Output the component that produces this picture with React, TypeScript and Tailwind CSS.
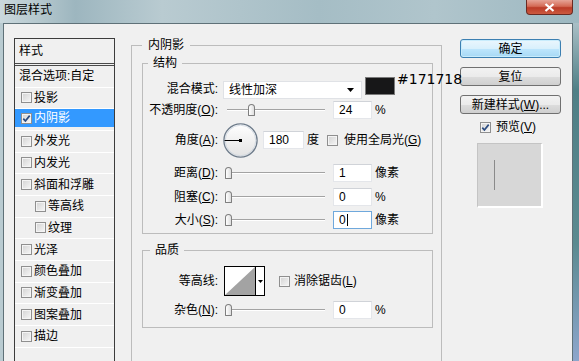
import React from 'react';

const FONT = "font-['Liberation_Sans','Noto_Sans_CJK_SC',sans-serif]";

const Check: React.FC<{ checked?: boolean }> = ({ checked }) => (
  <span className="inline-flex w-[11px] h-[11px] shrink-0 items-center justify-center border border-[#8f8f8f] bg-[linear-gradient(135deg,#d2d2d2,#f7f7f7)] shadow-[inset_0_0_0_1px_#f4f4f4]">
    {checked && (
      <svg width="9" height="9" viewBox="0 0 9 9">
        <path d="M1.3 4.6 L3.4 7 L7.7 1.6" stroke="#2a4b80" strokeWidth="1.7" fill="none" />
      </svg>
    )}
  </span>
);

const Slider: React.FC<{ at: 'zero' | 'low' }> = ({ at }) => (
  <div className="relative w-[100px] h-[14px] shrink-0">
    <div className="absolute left-[2px] right-0 top-[6px] h-[2px] border-t border-[#a3a3a3] bg-white" />
    <div
      className={`absolute top-[1px] w-[7px] h-[12px] rounded-t-[4px] rounded-b-[1px] border border-[#7f7f7f] bg-[linear-gradient(90deg,#ffffff,#dedede)] ${
        at === 'low' ? 'left-[23px]' : 'left-0'
      }`}
    />
  </div>
);

const Field: React.FC<{ value: string; w?: string; focus?: boolean }> = ({ value, w = 'w-[39px]', focus }) => (
  <div
    className={`${w} h-[18px] shrink-0 flex items-center pl-[5px] bg-white border ${
      focus ? 'border-[#6fa8dc]' : 'border-[#e4e6ea] border-t-[#d0d3d8]'
    }`}
  >
    <span>{value}</span>
    {focus && <span className="ml-[1px] w-[1px] h-[12px] bg-black" />}
  </div>
);

const Label: React.FC<{ children: React.ReactNode }> = ({ children }) => (
  <span className="w-[75px] shrink-0 text-right whitespace-nowrap">{children}</span>
);

const listItems = [
  { label: '投影' },
  { label: '内阴影', checked: true, active: true },
  { label: '外发光' },
  { label: '内发光' },
  { label: '斜面和浮雕' },
  { label: '等高线', sub: true },
  { label: '纹理', sub: true },
  { label: '光泽' },
  { label: '颜色叠加' },
  { label: '渐变叠加' },
  { label: '图案叠加' },
  { label: '描边' },
];

export default function App() {
  return (
    <div className={`w-[579px] h-[361px] overflow-hidden flex flex-col text-[12px] leading-[16px] text-black ${FONT}`}>
      {/* title bar */}
      <div className="h-[23px] shrink-0 flex items-start bg-[linear-gradient(90deg,#cad8dd_0%,#b4c7cd_7%,#9db6bf_13%,#b9cbd1_28%,#a5bdc5_55%,#b0c5cc_75%,#9db8c1_100%)]">
        <span className="ml-[4px] mt-[2px]">图层样式</span>
        <div className="ml-auto mr-[6px] w-[47px] h-[15px] flex items-center justify-center rounded-b-[4px] border border-t-0 border-[#6a2a22] bg-[linear-gradient(180deg,#e6a497_0%,#d46a55_45%,#bb3b27_55%,#cc5a40_100%)]">
          <svg width="11" height="9" viewBox="0 0 11 9">
            <path d="M1.5 1 L9.5 8 M9.5 1 L1.5 8" stroke="#ffffff" strokeWidth="2.2" />
          </svg>
        </div>
      </div>

      <div className="flex flex-1 min-h-0">
        <div className="w-[3px] shrink-0 bg-[#b9cbd1]" />

        {/* dialog body */}
        <div className="relative flex-1 flex bg-[#f0f0f0] border-t border-l border-r border-[#5f7178]">
          {/* style list */}
          <div className="pl-[10px] pt-[14px]">
            <div className="w-[101px] h-[400px] border border-[#3c3c3c] bg-[#f0f0f0]">
              <div className="h-[27px] pl-[4px] flex items-center border-b-[3px] border-double border-[#4a4a4a]">样式</div>
              <div className="h-[21.67px] pl-[4px] flex items-center border-b border-white whitespace-nowrap">混合选项:自定</div>
              {listItems.map((it) => (
                <div key={it.label} className="h-[21.67px] border-b border-white">
                  <div
                    className={`flex items-center gap-[2px] ${it.sub ? 'pl-[20px]' : 'pl-[6px]'} ${
                      it.active ? 'h-[18px] bg-[#3399ff] text-white' : 'h-full'
                    }`}
                  >
                    <Check checked={it.checked} />
                    <span>{it.label}</span>
                  </div>
                </div>
              ))}
            </div>
          </div>

          {/* main settings */}
          <div className="ml-[16px] pt-[13px]">
            <fieldset className="w-[311px] h-[340px] m-0 p-0 border border-[#bcbcbc]">
              <legend className="ml-[10px] px-[6px] leading-[16px]">内阴影</legend>
              <div className="pl-[10px] pr-[8px] pt-[2px]">
                <fieldset className="m-0 p-0 border border-[#bcbcbc]">
                  <legend className="ml-[5px] px-[5px] leading-[16px]">结构</legend>
                  <div className="flex flex-col pb-[4px]">
                    <div className="mt-[10px] h-[18px] flex items-start">
                      <Label>混合模式:</Label>
                      <div className="ml-[5px] w-[139px] h-[18px] flex items-center pl-[5px] pr-[7px] bg-white border border-[#e0e2e6]">
                        <span>线性加深</span>
                        <svg className="ml-auto" width="7" height="4" viewBox="0 0 7 4">
                          <path d="M0 0 H7 L3.5 4 Z" fill="#000" />
                        </svg>
                      </div>
                      <div className="ml-[3px] mt-[-4px] w-[30px] h-[18px] bg-[#171718] border border-[#7a7a7a]" />
                    </div>

                    <div className="mt-[2px] h-[18px] flex items-center">
                      <Label>
                        不透明度(<u>O</u>):
                      </Label>
                      <div className="ml-[7px]">
                        <Slider at="low" />
                      </div>
                      <div className="ml-[8px]">
                        <Field value="24" />
                      </div>
                      <span className="ml-[3px]">%</span>
                    </div>

                    <div className="mt-[3px] h-[36px] flex items-center">
                      <Label>
                        角度(<u>A</u>):
                      </Label>
                      <svg className="ml-[5px] shrink-0" width="35" height="35" viewBox="0 0 35 35">
                        <defs>
                          <linearGradient id="dial" x1="0" y1="0" x2="0" y2="1">
                            <stop offset="0" stopColor="#ffffff" />
                            <stop offset="1" stopColor="#e2e2e2" />
                          </linearGradient>
                        </defs>
                        <circle cx="17.5" cy="17.5" r="16.6" fill="url(#dial)" stroke="#6e7c8b" strokeWidth="1.3" />
                        <circle cx="17.5" cy="17.5" r="15.3" fill="none" stroke="#ccd4de" strokeWidth="0.8" />
                        <line x1="1.5" y1="17.5" x2="17.5" y2="17.5" stroke="#000" strokeWidth="1" />
                        <rect x="16" y="16" width="3" height="3" fill="#000" />
                      </svg>
                      <div className="ml-[5px]">
                        <Field value="180" w="w-[41px]" />
                      </div>
                      <span className="ml-[3px]">度</span>
                      <span className="ml-[8px] flex items-center">
                        <Check />
                      </span>
                      <span className="ml-[6px] whitespace-nowrap">
                        使用全局光(<u>G</u>)
                      </span>
                    </div>

                    <div className="mt-[6px] h-[18px] flex items-center">
                      <Label>
                        距离(<u>D</u>):
                      </Label>
                      <div className="ml-[7px]">
                        <Slider at="zero" />
                      </div>
                      <div className="ml-[8px]">
                        <Field value="1" />
                      </div>
                      <span className="ml-[3px]">像素</span>
                    </div>

                    <div className="mt-[6px] h-[18px] flex items-center">
                      <Label>
                        阻塞(<u>C</u>):
                      </Label>
                      <div className="ml-[7px]">
                        <Slider at="zero" />
                      </div>
                      <div className="ml-[8px]">
                        <Field value="0" />
                      </div>
                      <span className="ml-[3px]">%</span>
                    </div>

                    <div className="mt-[5px] h-[18px] flex items-center">
                      <Label>
                        大小(<u>S</u>):
                      </Label>
                      <div className="ml-[7px]">
                        <Slider at="zero" />
                      </div>
                      <div className="ml-[8px]">
                        <Field value="0" focus />
                      </div>
                      <span className="ml-[3px]">像素</span>
                    </div>
                  </div>
                </fieldset>

                <fieldset className="mt-[8px] m-0 p-0 border border-[#bcbcbc]">
                  <legend className="ml-[7px] px-[5px] leading-[16px]">品质</legend>
                  <div className="flex flex-col pb-[8px]">
                    <div className="mt-[8px] h-[30px] flex items-center">
                      <Label>等高线:</Label>
                      <div className="ml-[6px] w-[41px] h-[30px] flex border border-black bg-white">
                        <svg width="30" height="28" viewBox="0 0 30 28">
                          <polygon points="0,28 30,0 30,28" fill="#a3a3a3" />
                        </svg>
                        <div className="flex-1 flex items-center justify-center border-l border-black">
                          <svg width="5" height="3" viewBox="0 0 5 3">
                            <path d="M0 0 H5 L2.5 3 Z" fill="#000" />
                          </svg>
                        </div>
                      </div>
                      <span className="ml-[14px] flex items-center">
                        <Check />
                      </span>
                      <span className="ml-[4px] whitespace-nowrap">
                        消除锯齿(<u>L</u>)
                      </span>
                    </div>

                    <div className="mt-[5px] h-[18px] flex items-center">
                      <Label>
                        杂色(<u>N</u>):
                      </Label>
                      <div className="ml-[7px]">
                        <Slider at="zero" />
                      </div>
                      <div className="ml-[8px]">
                        <Field value="0" />
                      </div>
                      <span className="ml-[3px]">%</span>
                    </div>
                  </div>
                </fieldset>
              </div>
            </fieldset>
          </div>

          {/* buttons */}
          <div className="ml-[18px] pt-[15px] flex flex-col">
            <button className="w-[101px] h-[19px] flex items-center justify-center rounded-[3px] border border-[#3c7fb1] bg-[linear-gradient(180deg,#eaf6fd_0%,#d9f0fc_50%,#bee6fd_51%,#a7d9f5_100%)] shadow-[inset_0_0_0_1px_#c8ecfc]">
              确定
            </button>
            <button className="mt-[9px] w-[101px] h-[19px] flex items-center justify-center rounded-[3px] border border-[#707070] bg-[linear-gradient(180deg,#f2f2f2_0%,#ebebeb_50%,#dddddd_51%,#cfcfcf_100%)]">
              复位
            </button>
            <button className="mt-[9px] w-[101px] h-[19px] flex items-center justify-center rounded-[3px] border border-[#707070] bg-[linear-gradient(180deg,#f2f2f2_0%,#ebebeb_50%,#dddddd_51%,#cfcfcf_100%)]">
              新建样式(<u>W</u>)...
            </button>
            <div className="mt-[5px] h-[16px] pl-[20px] flex items-center">
              <Check checked />
              <span className="ml-[5px]">
                预览(<u>V</u>)
              </span>
            </div>
            <div className="mt-[8px] ml-[17px] w-[66px] h-[65px] pl-[16px] pt-[16px] bg-[#d7d7d7] border border-[#c4c4c4] border-r-2 border-b-2 border-r-white border-b-white">
              <div className="w-[1px] h-[30px] bg-[#8a8a8a]" />
            </div>
          </div>

          {/* colour annotation over the dialog */}
          <span className="absolute left-[393px] top-[47px] text-[14px] leading-[16px] font-['DejaVu_Sans',sans-serif] text-black">
            #171718
          </span>
        </div>

        <div className="w-[6px] shrink-0 bg-[linear-gradient(180deg,#a9bfc6_0%,#4f7f86_20%,#5b8a90_65%,#8da6cc_100%)]" />
      </div>
    </div>
  );
}
